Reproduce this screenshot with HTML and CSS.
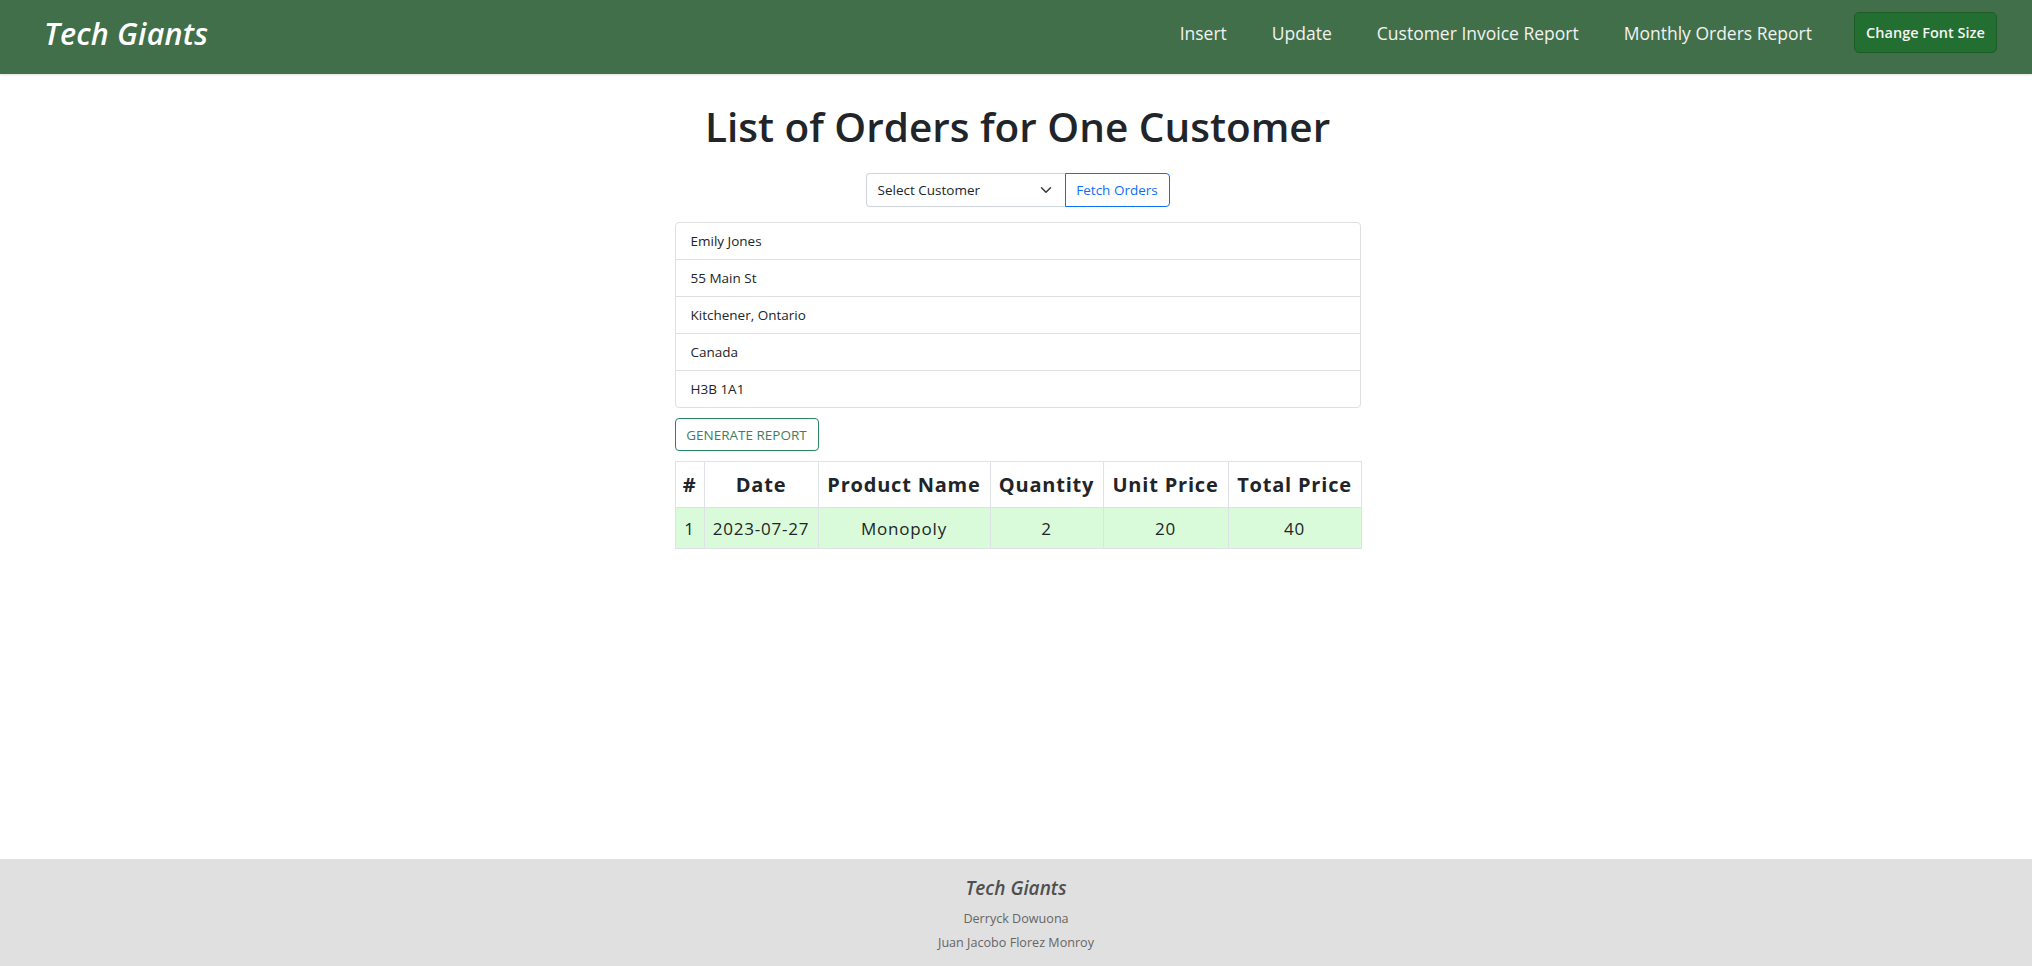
FILE: index.html
```html
<!DOCTYPE html>
<html lang="en">
<head>
<meta charset="utf-8">
<title>Tech Giants - List of Orders for One Customer</title>
<link rel="stylesheet" href="styles.css">
</head>
<body>
<header class="navbar">
  <a class="brand" href="#">Tech Giants</a>
  <nav class="nav">
    <a class="nav-link" href="#">Insert</a>
    <a class="nav-link" href="#">Update</a>
    <a class="nav-link" href="#">Customer Invoice Report</a>
    <a class="nav-link" href="#">Monthly Orders Report</a>
    <button class="btn-font" type="button">Change Font Size</button>
  </nav>
</header>

<main class="main">
  <h1 class="title">List of Orders for One Customer</h1>
  <form class="fetch-form">
    <div class="select">
      <span class="select-text">Select Customer</span>
      <svg class="chevron" width="12" height="12" viewBox="0 0 16 16"><path d="M2 5l6 6 6-6" fill="none" stroke="#343a40" stroke-width="2" stroke-linecap="round" stroke-linejoin="round"/></svg>
    </div>
    <button class="btn-fetch" type="button">Fetch Orders</button>
  </form>

  <section class="content">
    <ul class="list-group">
      <li class="list-item">Emily Jones</li>
      <li class="list-item">55 Main St</li>
      <li class="list-item">Kitchener, Ontario</li>
      <li class="list-item">Canada</li>
      <li class="list-item">H3B 1A1</li>
    </ul>
    <button class="btn-report" type="button">GENERATE REPORT</button>
    <table class="orders">
      <colgroup>
        <col class="c-num"><col class="c-date"><col class="c-prod"><col class="c-qty"><col class="c-unit"><col class="c-total">
      </colgroup>
      <thead>
        <tr><th>#</th><th>Date</th><th>Product Name</th><th>Quantity</th><th>Unit Price</th><th>Total Price</th></tr>
      </thead>
      <tbody>
        <tr><td>1</td><td>2023-07-27</td><td>Monopoly</td><td>2</td><td>20</td><td>40</td></tr>
      </tbody>
    </table>
  </section>
</main>

<footer class="footer">
  <div class="footer-brand">Tech Giants</div>
  <div class="footer-name">Derryck Dowuona</div>
  <div class="footer-name">Juan Jacobo Florez Monroy</div>
</footer>
</body>
</html>
```

FILE: styles.css
```css
* { box-sizing: border-box; }
html, body { margin: 0; padding: 0; }
body {
  font-family: "Open Sans", "Noto Sans", "DejaVu Sans", sans-serif;
  color: #212529;
  background: #ffffff;
  min-height: 100vh;
  display: flex;
  flex-direction: column;
}
.navbar {
  height: 74px;
  background: #416f49;
  display: flex;
  align-items: center;
  justify-content: space-between;
  padding: 0 35px 9px 44px;
  box-shadow: 0 1px 2px rgba(0,0,0,0.12);
}
.brand {
  color: #ffffff;
  font-style: italic;
  font-weight: 600;
  font-size: 30.5px;
  text-decoration: none;
  letter-spacing: 0.2px;
}
.nav {
  display: flex;
  align-items: center;
  gap: 45px;
}
.nav-link {
  color: #f2f2f2;
  text-decoration: none;
  font-size: 17.5px;
}
.btn-font {
  margin-left: -3px;
  width: 143px;
  height: 41px;
  background: #236e31;
  color: #f4f4f4;
  border: 1px solid #1c5c27;
  border-radius: 5px;
  font-family: inherit;
  font-size: 14.5px;
  font-weight: 600;
  padding: 0;
}
.main {
  flex: 1;
  display: flex;
  flex-direction: column;
  align-items: center;
  padding-left: 3px;
}
.title {
  margin: 24px 0 0;
  font-size: 40.5px;
  line-height: 58px;
  font-weight: 600;
  color: #212529;
}
.fetch-form {
  margin-top: 17px;
  display: flex;
  height: 34px;
}
.select {
  width: 199px;
  height: 34px;
  border: 1px solid #ced4da;
  border-right: none;
  border-radius: 4px 0 0 4px;
  display: flex;
  align-items: center;
  justify-content: space-between;
  padding: 0 13px 0 11px;
  font-size: 13.5px;
  color: #212529;
}
.chevron { display: block; }
.btn-fetch {
  width: 105px;
  height: 34px;
  background: #ffffff;
  border: 1px solid #0d6efd;
  border-radius: 0 4px 4px 0;
  color: #0d6efd;
  font-family: inherit;
  font-size: 13.5px;
  padding: 0;
}
.content {
  width: 686px;
  margin-top: 15px;
}
.list-group {
  list-style: none;
  margin: 0;
  padding: 0;
  border: 1px solid #dfdfdf;
  border-radius: 4px;
}
.list-item {
  padding: 8px 15px;
  line-height: 20px;
  font-size: 13.5px;
  color: #212529;
  border-bottom: 1px solid #dfdfdf;
}
.list-item:last-child { border-bottom: none; }
.btn-report {
  display: block;
  margin-top: 10px;
  width: 144px;
  height: 33px;
  background: #ffffff;
  border: 1px solid #2a8560;
  border-radius: 4px;
  color: #3f7d62;
  font-family: inherit;
  font-size: 13.5px;
  padding: 0;
}
.orders {
  margin-top: 10px;
  width: 686px;
  border-collapse: collapse;
  table-layout: fixed;
  letter-spacing: 0.8px;
}
.c-num { width: 29px; }
.c-date { width: 114px; }
.c-prod { width: 172px; }
.c-qty { width: 113px; }
.c-unit { width: 125px; }
.c-total { width: 133px; }
.orders th, .orders td {
  border: 1px solid #dee2e6;
  text-align: center;
  padding: 0;
  white-space: nowrap;
}
.orders th {
  height: 46px;
  font-size: 20px;
  font-weight: 700;
  color: #212529;
}
.orders td {
  height: 41px;
  font-size: 17px;
  background: #d9fbd9;
  color: #212529;
}
.footer {
  background: #e0e0e0;
  height: 107px;
  text-align: center;
  padding-top: 15px;
}
.footer-brand {
  font-style: italic;
  font-weight: 600;
  font-size: 19px;
  line-height: 28px;
  color: #4f4f4f;
  margin-bottom: 5px;
}
.footer-name {
  font-size: 12.6px;
  line-height: 24px;
  color: #666666;
}
```
